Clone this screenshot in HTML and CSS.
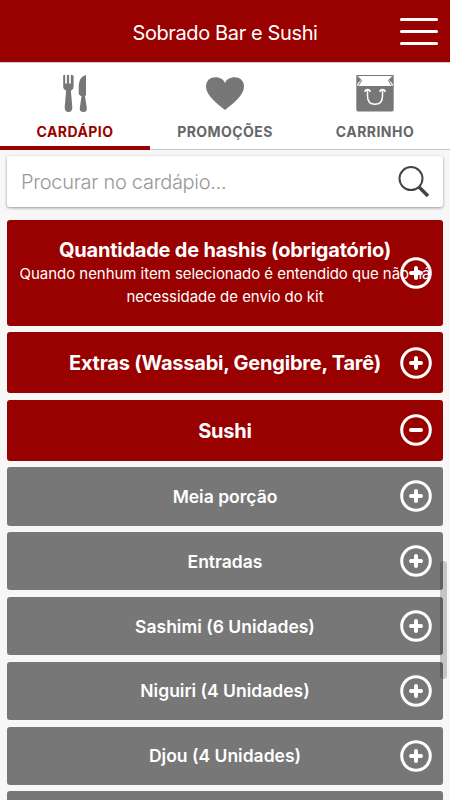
FILE: index.html
```html
<!DOCTYPE html>
<html lang="pt-BR">
<head>
  <meta charset="UTF-8">
  <meta name="viewport" content="width=device-width, initial-scale=1.0">
  <title>Sobrado Bar e Sushi</title>
  <link rel="stylesheet" href="styles.css">
</head>
<body>
  <!-- Ícones reutilizados na lista -->
  <svg class="sprite" aria-hidden="true">
    <symbol id="icon-plus" viewBox="0 0 32 32">
      <circle cx="16" cy="16" r="14.3" />
      <path d="M11 16h10M16 11v10" stroke-width="4" />
    </symbol>
    <symbol id="icon-minus" viewBox="0 0 32 32">
      <circle cx="16" cy="16" r="14.3" />
      <path d="M11 16h10" stroke-width="4" />
    </symbol>
  </svg>

  <header class="topbar">
    <h1>Sobrado Bar e Sushi</h1>
    <button class="menu-btn" aria-label="Menu">
      <span></span>
      <span></span>
      <span></span>
    </button>
  </header>

  <nav class="tabs">
    <a class="tab active" href="#">
      <svg width="38" height="40" viewBox="0 0 38 40">
        <path d="M7.2 2.6Q8.2 1 9.2 2.6V10.500h1.700V2.600q1.100-1.600 2.200 0v7.900h1.700V2.600q1-1.600 2 0q.7-.6.800.6v10.800q0 2.600-2.700 3.800l1.400 16.500q.2 4.700-3.800 4.700t-3.800-4.700l1.400-16.500q-2.900-1.200-2.900-3.800z" />
        <path d="M30 2v20l-1 1.200 1.800 11.500q.6 4.300-3.400 4.300t-3.600-4.300l1.700-11.500q-2.800-.8-2.800-3V13Q23.300 3.500 30 2z" />
      </svg>
      <span class="tab-label">CARDÁPIO</span>
    </a>
    <a class="tab" href="#">
      <svg width="38" height="40" viewBox="0 0 38 40">
        <path d="M19 37C12 31 0 23 0 13.500C0 7.500 4.500 4.300 9.500 4.300C14 4.300 17.500 6.500 19 10C20.500 6.500 24 4.300 28.500 4.300C33.500 4.300 38 7.500 38 13.500C38 23 26 31 19 37z" />
      </svg>
      <span class="tab-label">PROMOÇÕES</span>
    </a>
    <a class="tab" href="#">
      <svg width="38" height="40" viewBox="0 0 38 40">
        <path d="M.3 13h37.400v23q0 2.600-2.600 2.600H2.900Q.3 38.600.3 36z" />
        <path d="M1 3.500L5 7 1 11zM37 3.500L33 7l4 4z" />
        <path class="line" d="M.8 2.500h36.400M.8 2.500v11M37.200 2.500v11M1 2.500L5.500 7.500 2.500 12.500M37 2.500L32.500 7.500l3 5" />
        <path class="handle" d="M9 19q0-2.500 2.500-2.500t2.500 2.500M24 19q0-2.500 2.500-2.500t2.500 2.500M11.500 17v6q0 8.300 7.500 8.300t7.500-8.300v-6" />
      </svg>
      <span class="tab-label">CARRINHO</span>
    </a>
  </nav>

  <main>
    <div class="search-container">
      <input type="text" placeholder="Procurar no cardápio...">
      <svg class="search-icon" width="32" height="32" viewBox="0 0 32 32">
        <circle cx="13" cy="12.6" r="11.5" />
        <path d="M21 21l9 9" />
      </svg>
    </div>

    <section class="menu-list">
      <div class="category tall">
        <div>
          <h2>Quantidade de hashis (obrigatório)</h2>
          <p>Quando nenhum item selecionado é entendido que não há<br>necessidade de envio do kit</p>
        </div>
        <svg class="toggle"><use href="#icon-plus" /></svg>
      </div>
      <div class="category">
        <h2>Extras (Wassabi, Gengibre, Tarê)</h2>
        <svg class="toggle"><use href="#icon-plus" /></svg>
      </div>
      <div class="category">
        <h2>Sushi</h2>
        <svg class="toggle"><use href="#icon-minus" /></svg>
      </div>
      <div class="category sub">
        <h3>Meia porção</h3>
        <svg class="toggle"><use href="#icon-plus" /></svg>
      </div>
      <div class="category sub">
        <h3>Entradas</h3>
        <svg class="toggle"><use href="#icon-plus" /></svg>
      </div>
      <div class="category sub">
        <h3>Sashimi (6 Unidades)</h3>
        <svg class="toggle"><use href="#icon-plus" /></svg>
      </div>
      <div class="category sub">
        <h3>Niguiri (4 Unidades)</h3>
        <svg class="toggle"><use href="#icon-plus" /></svg>
      </div>
      <div class="category sub">
        <h3>Djou (4 Unidades)</h3>
        <svg class="toggle"><use href="#icon-plus" /></svg>
      </div>
      <div class="category sub"></div>
    </section>
  </main>

  <div class="scroll-thumb"></div>
</body>
</html>
```
FILE: styles.css
```css
* {
  margin: 0;
  padding: 0;
  box-sizing: border-box;
}

body {
  position: relative;
  height: 100vh;
  overflow: hidden;
  font-family: Inter, "Liberation Sans", sans-serif;
  background-color: #f7f7f7;
  color: #fff;
}

.sprite {
  display: none;
}

/* Topo */
.topbar {
  position: relative;
  height: 62px;
  padding-top: 4px;
  display: flex;
  align-items: center;
  justify-content: center;
  background-color: #990000;
}

.topbar h1 {
  font-size: 20px;
  font-weight: 400;
  letter-spacing: -0.38px;
}

.menu-btn {
  position: absolute;
  top: 18px;
  right: 12px;
  width: 38px;
  display: flex;
  flex-direction: column;
  gap: 9px;
  background: none;
  border: none;
}

.menu-btn span {
  height: 3px;
  border-radius: 2px;
  background-color: #fff;
}

/* Abas */
.tabs {
  display: flex;
  height: 88px;
  background-color: #fff;
  border-top: 1px solid #ccc;
}

.tab {
  flex: 1;
  display: flex;
  flex-direction: column;
  align-items: center;
  padding-top: 10px;
  color: #666;
  font-size: 14px;
  font-weight: 700;
  text-decoration: none;
  border-bottom: 1px solid #c5c5ca;
}

.tab.active {
  color: #990000;
  border-bottom: 4px solid #990000;
}

.tab svg {
  flex: none;
  fill: #777;
}

.tab .line {
  fill: none;
  stroke: #777;
}

.tab .handle {
  fill: none;
  stroke: #fff;
  stroke-width: 1.5;
}

.tab-label {
  margin-top: 9px;
  line-height: 20px;
  letter-spacing: 0.45px;
}

/* Pesquisa */
main {
  height: 650px;
  padding: 6px 7px 0;
  overflow: hidden;
}

.search-container {
  display: flex;
  align-items: center;
  height: 51px;
  padding: 0 13px 0 14px;
  background-color: #fff;
  border-radius: 3px;
  box-shadow: 0 1px 3px rgba(0, 0, 0, 0.4);
}

.search-container input {
  flex: 1;
  min-width: 0;
  border: none;
  outline: none;
  font-family: inherit;
  font-size: 20px;
  font-weight: 300;
  letter-spacing: -0.3px;
}

.search-container input::placeholder {
  color: #999;
}

.search-icon {
  fill: none;
  stroke: #444;
  stroke-width: 2;
}

.search-icon path {
  stroke-width: 3.5;
}

/* Lista do cardápio */
.menu-list {
  display: flex;
  flex-direction: column;
  gap: 6.6px;
  margin-top: 12.6px;
}

.category {
  position: relative;
  flex: none;
  height: 61px;
  display: flex;
  align-items: center;
  justify-content: center;
  text-align: center;
  background-color: #990000;
  border-radius: 3px;
}

.category.tall {
  height: 106px;
}

.category.sub {
  height: 58.2px;
  background-color: #777;
}

.category h2 {
  padding-top: 1px;
  font-size: 20px;
  font-weight: 700;
  line-height: 24px;
  letter-spacing: -0.22px;
}

.category h3 {
  font-size: 17.5px;
  font-weight: 600;
}

.category p {
  font-size: 15px;
  line-height: 23px;
  letter-spacing: -0.04px;
  white-space: nowrap;
}

.toggle {
  position: absolute;
  top: calc(50% - 16px);
  right: 11px;
  width: 32px;
  height: 32px;
  fill: none;
  stroke: #fff;
  stroke-width: 3;
  stroke-linecap: round;
}

.scroll-thumb {
  position: absolute;
  top: 561px;
  right: 3px;
  width: 7px;
  height: 118px;
  border-radius: 3px;
  background-color: rgba(0, 0, 0, 0.2);
}
```
